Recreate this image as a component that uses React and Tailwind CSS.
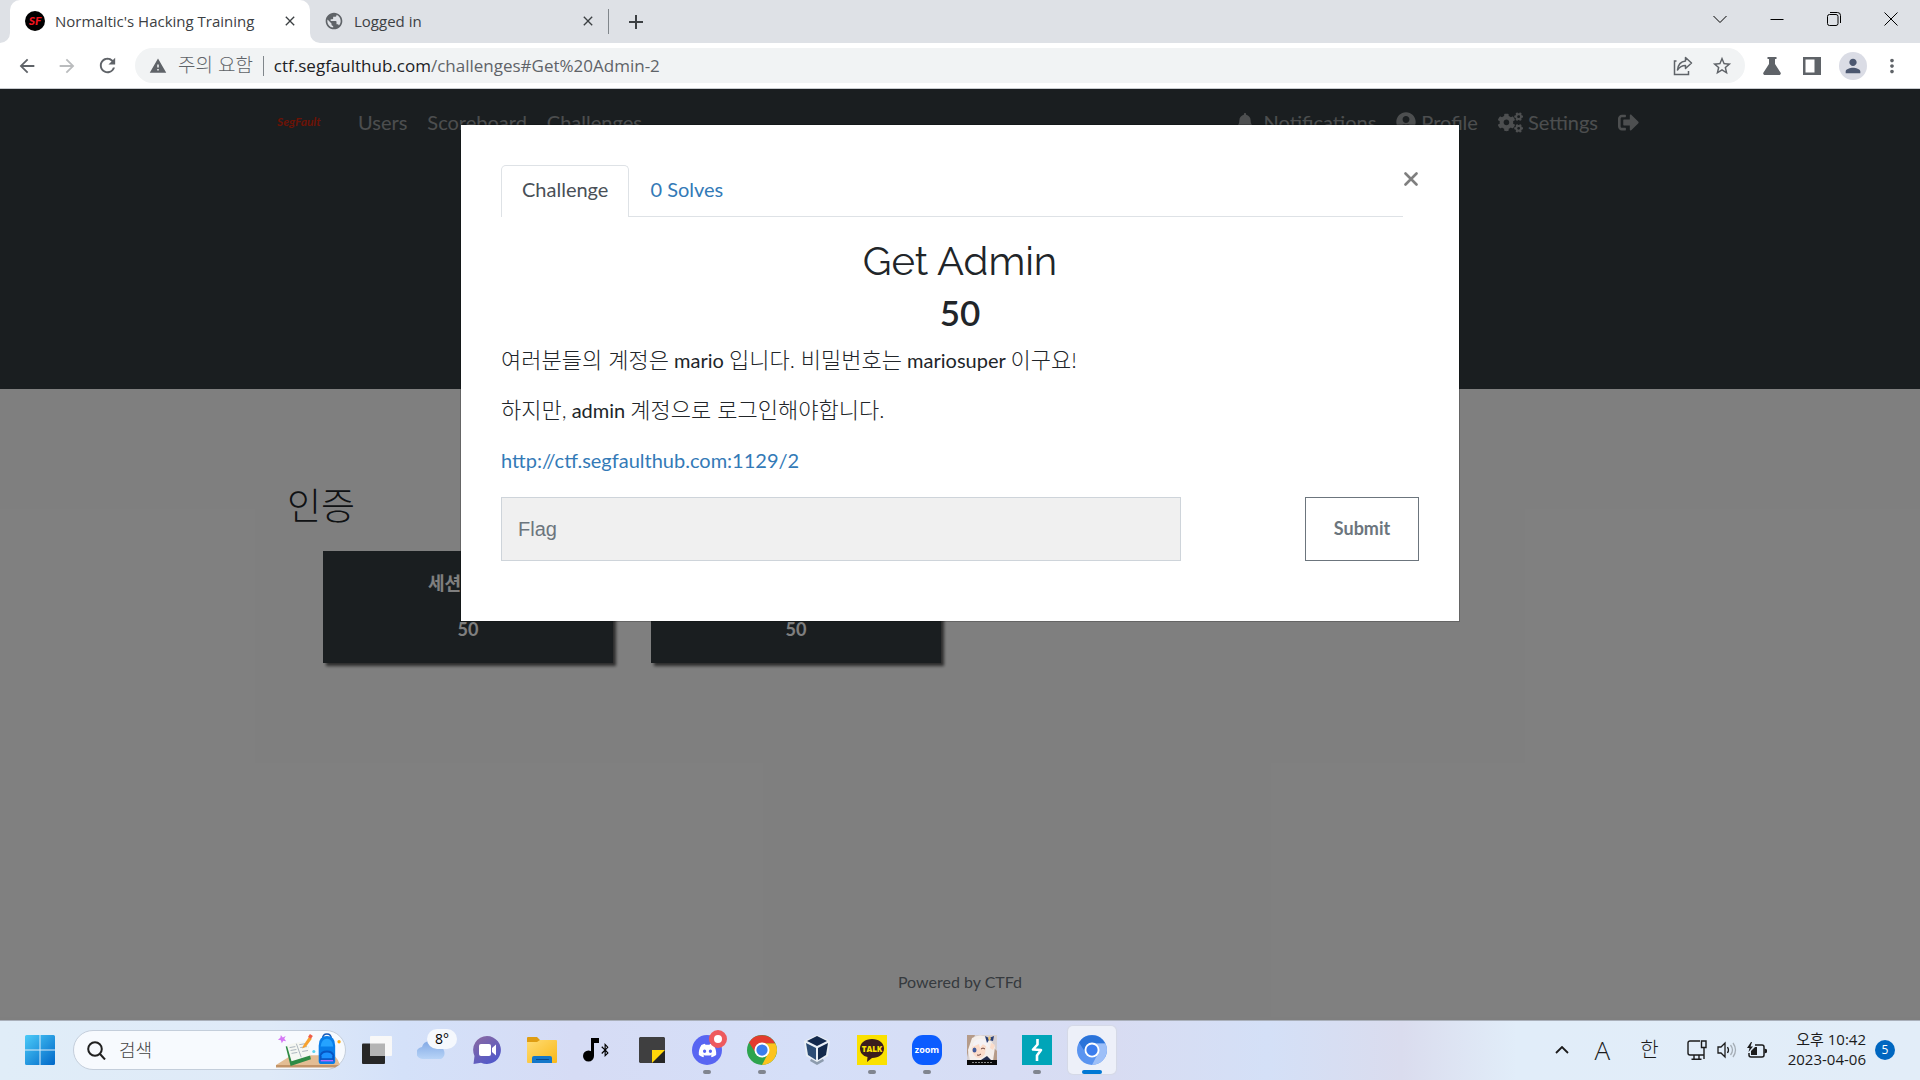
import { useState } from 'react'
import { FaBell, FaBluetoothB, FaCogs, FaDiscord, FaSignOutAlt, FaUserCircle } from 'react-icons/fa'
import {
  MdAdd,
  MdArrowBack,
  MdArrowForward,
  MdClose,
  MdMoreVert,
  MdPerson,
  MdPublic,
  MdRefresh,
  MdStarOutline,
  MdWarning,
} from 'react-icons/md'

const uiFont = "font-['Open_Sans','Noto_Sans_CJK_KR',sans-serif]"
const siteFont = "font-['Lato','Noto_Sans_CJK_KR',sans-serif]"

function TabStrip() {
  return (
    <div className="flex h-[43px] items-stretch bg-[#dee1e6] pl-[10px] text-[15px] text-[#3c4043]">
      <div className="relative flex w-[300px] items-center rounded-t-[10px] bg-white pr-[12px] pb-px pl-[15px]">
        <span className="flex size-5 items-center justify-center rounded-full bg-black font-['Lato',sans-serif] text-xs font-black text-[#f0141e] italic">
          SF
        </span>
        <span className="ml-[10px] flex-1 truncate">Normaltic's Hacking Training</span>
        <button aria-label="Close tab"><MdClose className="size-4" /></button>
        <svg className="absolute bottom-0 -left-[10px] size-[10px] text-white" viewBox="0 0 10 10" aria-hidden="true">
          <path fill="currentColor" d="M10 0v10H0A10 10 0 0 0 10 0z" />
        </svg>
        <svg className="absolute -right-[10px] bottom-0 size-[10px] text-white" viewBox="0 0 10 10" aria-hidden="true">
          <path fill="currentColor" d="M0 0v10h10A10 10 0 0 1 0 0z" />
        </svg>
      </div>
      <div className="flex w-[298px] items-center pr-[12px] pb-px pl-[14px]">
        <MdPublic className="size-5 text-[#5f6368]" />
        <span className="ml-[10px] flex-1 truncate">Logged in</span>
        <button aria-label="Close tab"><MdClose className="size-4" /></button>
      </div>
      <div className="my-[9px] w-px bg-[#80868b]" />
      <button aria-label="New tab" className="ml-[15px]"><MdAdd className="size-6" /></button>
      <div className="ml-auto flex items-center gap-[43px] pr-[22px] pb-[5px] text-black">
        <button aria-label="Search tabs">
          <svg width="14" height="14" viewBox="0 0 14 14" fill="none" stroke="currentColor"><path d="M.5 4 7 10.500 13.500 4" /></svg>
        </button>
        <button aria-label="Minimize">
          <svg width="14" height="14" viewBox="0 0 14 14" fill="none" stroke="currentColor"><path d="M.5 7.500h13" /></svg>
        </button>
        <button aria-label="Restore">
          <svg width="14" height="14" viewBox="0 0 14 14" fill="none" stroke="currentColor">
            <rect x=".5" y="2.500" width="10.500" height="11" rx="2" />
            <path d="M3 .5h7.500a3 3 0 0 1 3 3v7.500" />
          </svg>
        </button>
        <button aria-label="Close">
          <svg width="14" height="14" viewBox="0 0 14 14" fill="none" stroke="currentColor"><path d="m.5.5 13 13M13.500.5l-13 13" /></svg>
        </button>
      </div>
    </div>
  )
}

function Toolbar() {
  return (
    <div className="flex h-[46px] items-center border-b border-[#c8cbcf] bg-white pr-[17px] pl-[16px] text-[#5f6368]">
      <button aria-label="Back"><MdArrowBack className="size-[22px]" /></button>
      <button aria-label="Forward" className="ml-[18px] text-[#babcbe]"><MdArrowForward className="size-[22px]" /></button>
      <button aria-label="Reload" className="ml-[18px]"><MdRefresh className="size-[23px]" /></button>
      <div className="ml-[16px] flex h-[35px] flex-1 items-center rounded-full bg-[#f1f3f4] pr-[12px] pl-[14px] text-[17px]">
        <MdWarning className="size-[18px]" />
        <span className="ml-[11px] text-[19px] font-light">주의 요함</span>
        <span className="mx-[10px] h-5 w-px bg-[#80868b]" />
        <span className="flex-1">
          <span className="text-[#202124]">ctf.segfaulthub.com</span>/challenges#Get%20Admin-2
        </span>
        <button aria-label="Share">
          <svg width="20" height="20" viewBox="0 0 20 20" fill="none" stroke="currentColor" strokeWidth="1.5">
            <path d="M3.500 5H1.500v13.500h14V15" />
            <path strokeLinejoin="round" d="M12.500 1.500 18.500 7l-6 5.500V9.500C9 9.500 6.500 11 4.500 14c.5-5 3.500-8.500 8-9z" />
          </svg>
        </button>
        <button aria-label="Bookmark" className="ml-[18px]"><MdStarOutline className="size-[22px]" /></button>
      </div>
      <button aria-label="Labs" className="ml-[18px]">
        <svg width="18" height="18" viewBox="0 0 18 18" fill="currentColor">
          <path d="M4.500 0h9v2H12v5l5.500 8.500c.8 1.300 0 2.500-1.500 2.500H2C.5 18-.3 16.800.5 15.500L6 7V2H4.500z" />
        </svg>
      </button>
      <button aria-label="Side panel" className="ml-[22px]">
        <svg width="18" height="18" viewBox="0 0 18 18" fill="currentColor">
          <path fillRule="evenodd" d="M0 0h18v18H0zM2.500 2.500v13h9v-13z" />
        </svg>
      </button>
      <button aria-label="Profile" className="ml-[18px] flex size-7 items-center justify-center rounded-full bg-[#dadce5] text-[#4b5770]">
        <MdPerson className="size-[22px]" />
      </button>
      <button aria-label="Menu" className="ml-[14px]"><MdMoreVert className="size-[22px]" /></button>
    </div>
  )
}

function SiteNav() {
  return (
    <nav className="mx-auto flex h-[66px] max-w-[1366px] items-center text-xl text-white/50">
      <a href="#home" className="flex h-4 w-[71px] items-center font-['Lato',sans-serif] text-xs font-bold text-[#d6260c] italic">
        SegFault
      </a>
      <div className="flex gap-5 pl-[10px]">
        <a href="#users">Users</a>
        <a href="#scoreboard">Scoreboard</a>
        <a href="#challenges">Challenges</a>
      </div>
      <div className="ml-auto flex gap-5 pr-1">
        <a href="#notifications" className="flex items-center gap-[10px]"><FaBell className="size-[18px]" />Notifications</a>
        <a href="#profile" className="flex items-center gap-[5px]"><FaUserCircle className="size-5" />Profile</a>
        <a href="#settings" className="flex items-center gap-[5px]"><FaCogs className="size-[25px]" />Settings</a>
        <a href="#logout" aria-label="Logout" className="flex items-center"><FaSignOutAlt className="size-[21px]" /></a>
      </div>
    </nav>
  )
}

function ChallengeCard({ name, value, align }) {
  return (
    <button className={`h-[112px] w-[290px] bg-[#343c40] pb-[3px] text-lg font-bold text-white shadow-[3px_3px_3px_0_rgba(0,0,0,0.65)] ${align}`}>
      <p className="mx-auto mb-[18px] w-20 whitespace-nowrap">{name}</p>
      <p className="text-center">{value}</p>
    </button>
  )
}

function ChallengeModal() {
  const [flag, setFlag] = useState('')
  return (
    <div className="absolute inset-0 flex items-start justify-center bg-black/50 pt-[35px]">
      <div role="dialog" aria-label="Get Admin" className="w-full max-w-[1000px] border border-black/20 bg-white bg-clip-padding px-10 pb-[60px] text-xl leading-[30px] text-[#212529]">
        <div className="flex items-start pt-10">
          <div role="tablist" className="flex flex-1 border-b border-[#dee2e6]">
            <button role="tab" aria-selected="true" className="-mb-px h-[52px] rounded-t-[5px] border border-b-0 border-[#dee2e6] bg-white px-5 pb-[5px] text-[#495057]">
              Challenge
            </button>
            <button role="tab" aria-selected="false" className="px-[21px] pb-1 text-[#337ab7]">0 Solves</button>
          </div>
          <button aria-label="Close" className="flex h-7 w-4 items-center justify-center text-[#7f7f7f]">
            <svg width="14" height="14" viewBox="0 0 14 14" stroke="currentColor" strokeWidth="2.600" strokeLinecap="round">
              <path d="m1.500 1.500 11 11M12.500 1.500l-11 11" />
            </svg>
          </button>
        </div>
        <h2 className="mt-5 text-center font-['Raleway','Open_Sans',sans-serif] text-[40px] leading-[48px]">Get Admin</h2>
        <h3 className="mt-[6px] text-center text-[35px] leading-[42px] font-semibold">50</h3>
        <div className="mt-3 flex flex-col gap-5">
          <p>
            <span className="text-[22px] font-light">여러분들의 계정은</span> mario{' '}
            <span className="text-[22px] font-light">입니다. 비밀번호는</span> mariosuper{' '}
            <span className="text-[22px] font-light">이구요!</span>
          </p>
          <p>
            <span className="text-[22px] font-light">하지만,</span> admin{' '}
            <span className="text-[22px] font-light">계정으로 로그인해야합니다.</span>
          </p>
          <p><a href="http://ctf.segfaulthub.com:1129/2" className="text-[#337ab7]">http://ctf.segfaulthub.com:1129/2</a></p>
        </div>
        <div className="mt-[22px] flex h-16 justify-between">
          <input
            aria-label="Flag"
            placeholder="Flag"
            value={flag}
            onChange={(e) => setFlag(e.target.value)}
            className="w-[680px] border border-[#ced4da] bg-[#f0f0f0] px-4 font-['Liberation_Sans',sans-serif] text-xl placeholder:text-[#6c757d]"
          />
          <button className="w-[114px] border border-[#6c757d] pb-[2px] text-lg font-bold text-[#6c757d]">Submit</button>
        </div>
      </div>
    </div>
  )
}

function Site() {
  return (
    <main className={`relative flex flex-1 flex-col bg-white ${siteFont}`}>
      <header className="h-[300px] bg-[#343c40]"><SiteNav /></header>
      <section className="mx-auto w-full max-w-[1346px] pt-[93px]">
        <h3 className="text-[37px] leading-[48px] font-light text-[#212529]">인증</h3>
        <div className="mt-[21px] flex gap-[38px] pl-9">
          <ChallengeCard name="세션" value="50" align="text-left" />
          <ChallengeCard name="Get Admin" value="50" align="text-center" />
        </div>
      </section>
      <footer className="mt-auto pb-[26px] text-center text-base text-[#6c757d]">Powered by CTFd</footer>
      <ChallengeModal />
    </main>
  )
}

function WindowsLogo() {
  return (
    <svg width="30" height="30" viewBox="0 0 30 30">
      <defs>
        <linearGradient id="win" x1="0" y1="0" x2="1" y2="1">
          <stop stopColor="#4ccbf8" />
          <stop offset="1" stopColor="#0067c8" />
        </linearGradient>
      </defs>
      <path fill="url(#win)" d="M1.500 0h13v14.500H0v-13A1.500 1.500 0 0 1 1.500 0zM15.500 0h13A1.500 1.500 0 0 1 30 1.500v13H15.500zM0 15.500h14.500V30h-13A1.500 1.500 0 0 1 0 28.500zM15.500 15.500H30v13a1.500 1.500 0 0 1-1.500 1.500h-13z" />
    </svg>
  )
}

function BackpackArt() {
  return (
    <svg width="65" height="36" viewBox="0 0 67 37">
      <path fill="#e3bd94" d="M16 24h44q4 4 6 10H0z" />
      <path fill="#c39468" d="M0 34h65l-4 2.500H0z" />
      <path fill="#d678f5" d="m5 3 2 2.500L10 4 8.500 7l2 2.500-3-.5L6 11.500 5 8.500 2 8l2.500-2z" />
      <path fill="#2e8b45" d="m10 15 22-5 4 18-21 7z" />
      <path fill="#f5f7f2" d="m11 13 10-2 11-2 4 15-10 3-10 3z" />
      <path stroke="#a9b4bd" fill="none" d="m21 12 5 14M14 16l6-1M15 19l6-1M16 22l6-1M24 13l6-1M25 16l7-1M27 20l6-1" />
      <path fill="#f7a12c" d="m28 14 6-9 3 2-6 8-4 2z" />
      <path fill="#ef5c46" d="m33 5 2-3 3 2-2 3z" />
      <circle cx="39" cy="20" r="1.600" fill="#5ad3ee" />
      <circle cx="65" cy="10" r="1.700" fill="#ffab0f" />
      <path fill="none" stroke="#1659b7" strokeWidth="1.500" d="M48 7q0-5 4.500-5T57 7" />
      <path fill="#087de8" d="M44 14q0-10 8.500-10T61 14v16q0 3-3 3H47q-3 0-3-3z" />
      <path fill="#25a3ff" d="M46 15q1-8 6.500-8T59 15z" />
      <path fill="#0756c3" d="M45 24q1-5 7.500-5t7.500 5v6H45z" />
      <path fill="#1b92ff" d="M47 24q1-3 5.500-3t5.500 3v3H47z" />
      <path stroke="#b36cff" strokeWidth="1.500" d="M46 29.500h13" />
    </svg>
  )
}

function TaskView() {
  return (
    <svg width="30" height="28" viewBox="0 0 30 28">
      <rect x="0" y="7.500" width="23" height="20.500" rx="1" fill="#272727" />
      <rect x="8" y="0" width="22" height="20" rx="1" fill="#f8f8f8" />
      <path fill="#b4b4b4" d="M8 7.500h15V20H8z" />
    </svg>
  )
}

function Weather() {
  return (
    <>
      <svg width="30" height="20" viewBox="0 0 30 20">
        <defs>
          <linearGradient id="cloud" x1="0" y1="0" x2="0" y2="1">
            <stop stopColor="#82a9e5" />
            <stop offset="1" stopColor="#b8d4f7" />
          </linearGradient>
        </defs>
        <path fill="url(#cloud)" d="M6 19a6 6 0 0 1-1-12 8 8 0 0 1 15-1 7 7 0 0 1 4 13h-18z" />
      </svg>
      <span className="absolute top-[3px] left-[19px] flex h-5 w-[30px] items-center justify-center rounded-full bg-[#f5f8fd] text-sm">8°</span>
    </>
  )
}

function ChatIcon() {
  return (
    <svg width="28" height="28" viewBox="0 0 28 28">
      <defs>
        <linearGradient id="chat" x1="0" y1="0" x2="0.600" y2="1">
          <stop stopColor="#8d6a9f" />
          <stop offset="1" stopColor="#5259c9" />
        </linearGradient>
      </defs>
      <path fill="url(#chat)" d="M14 0a14 14 0 1 1-6 26.700L.5 28 1.500 20A14 14 0 0 1 14 0z" />
      <rect x="6" y="8" width="12" height="12" rx="2" fill="#fff" />
      <path fill="#fff" d="m19 12 4-3.500v11L19 16z" />
    </svg>
  )
}

function FolderIcon() {
  return (
    <svg width="30" height="26" viewBox="0 0 30 26">
      <defs>
        <linearGradient id="folder" x1="0" y1="0" x2="1" y2="1">
          <stop stopColor="#ffdc74" />
          <stop offset="1" stopColor="#f9b818" />
        </linearGradient>
      </defs>
      <path fill="#df9d12" d="M0 1q0-1 1-1h9l3 3h15v6H0z" />
      <path fill="url(#folder)" d="M0 5h10l3-2h16q1 0 1 1v21q0 1-1 1H1q-1 0-1-1z" />
      <path fill="#1477c9" d="M5 26v-5q0-2 2-2h16q2 0 2 2v5z" />
      <path stroke="#09498c" d="M9 22.500h13" />
    </svg>
  )
}

function MusicIcon() {
  return (
    <>
      <svg className="shrink-0" width="16" height="24" viewBox="0 0 16 24">
        <circle cx="5.500" cy="18" r="5.500" />
        <path d="M8 0h8v5h-5v13H8z" />
      </svg>
      <FaBluetoothB className="-ml-px size-[14px] shrink-0" />
    </>
  )
}

function NoteIcon() {
  return (
    <svg width="26" height="26" viewBox="0 0 26 26">
      <path fill="#3f3f40" d="M1 0h24l1 1v24l-1 1H1l-1-1V1z" />
      <path fill="#252525" d="M13 13h13v13H13z" />
      <path fill="#ffd60a" d="M13 13h13L13 26z" />
    </svg>
  )
}

function DiscordIcon() {
  return (
    <>
      <span className="flex size-[30px] items-center justify-center rounded-full bg-[#5865f2]">
        <FaDiscord className="size-[19px] text-white" />
      </span>
      <span className="absolute top-1 right-[4px] size-[18px] rounded-full border-5 border-[#ee5a5d] bg-white" />
    </>
  )
}

function BrowserIcon({ top, left, right }) {
  return (
    <svg width="30" height="30" viewBox="0 0 48 48">
      <circle cx="24" cy="24" r="24" fill={left} />
      <path fill={right} d="M24 13h21.300A24 24 0 0 1 24 48l9.500-18.500z" />
      <path fill={top} d="M3.200 12a24 24 0 0 1 41.600 1H24a11 11 0 0 0-9.500 16.500z" />
      <circle cx="24" cy="24" r="12" fill="#fff" />
      <circle cx="24" cy="24" r="9" fill="#3b7ded" />
    </svg>
  )
}

function BoxIcon() {
  return (
    <svg width="26" height="30" viewBox="0 0 26 30">
      <path fill="#8d9cae" d="m13 30-7-4 2-4h10l2 4z" />
      <path fill="#e9eff5" d="M13 0 26 6l-2 15-11 6L2 21 0 6z" />
      <path fill="#13294c" d="m13 1 10 5-10 5L3 6z" />
      <path fill="#2c4c74" d="m2 8 10 5v12l-8-5z" />
      <path fill="#142a4b" d="m24 8-10 5v12l8-5z" />
    </svg>
  )
}

function TalkIcon() {
  return (
    <span className="relative flex size-[30px] items-center justify-center bg-[#fae100]">
      <svg className="absolute inset-0" width="30" height="30" viewBox="0 0 30 30">
        <path fill="#3a1d1d" d="M15 4c7 0 12 4 12 9.500S22 23 15 23l-5 4 .5-5C6 21 3 18 3 13.500 3 8 8 4 15 4z" />
      </svg>
      <span className="relative pb-[3px] font-['Open_Sans',sans-serif] text-[8px] leading-none font-extrabold text-[#fae100]">TALK</span>
    </span>
  )
}

function ZoomIcon() {
  return (
    <span className="flex size-[30px] items-center justify-center rounded-[11px] bg-[#0b5cff] pb-[2px] font-['Open_Sans',sans-serif] text-[9px] leading-none font-bold text-white">
      zoom
    </span>
  )
}

function GameIcon() {
  return (
    <svg width="30" height="30" viewBox="0 0 30 30">
      <path fill="#d7d0d2" d="M0 0h30v30H0z" />
      <path fill="#b59b89" d="M0 0h8L2 14 0 22zM26 12l4 4v9h-7z" />
      <path fill="#f4eeea" d="M5 3q8-5 17 0l6 9-2 14H3L1 15z" />
      <path fill="#fbdcca" d="M5 10q6-5 14 1l-1 8q-4 6-9 3-5-4-4-12z" />
      <path fill="#f5f2f4" d="M5 12Q7 3 15 4q6 1 7 9l-6-4-3 4-1-4z" />
      <ellipse cx="7.500" cy="15" rx="2" ry="2.500" fill="#435c9d" />
      <path fill="none" stroke="#6e443d" d="M14 14q2-2 4 0M10 20q2 1 4-1" />
      <path fill="#fbdcca" d="m24 8 4 2-2 5-3-2z" />
      <path fill="#263e78" d="m18 1 4 2 5-2-1 5-4-1-2 3z" />
      <path fill="#ebc374" d="m21 3 2-2 1 3-2 2z" />
      <path fill="#222b4c" d="m14 25 6-4 4 4z" />
      <path fill="#090909" d="M0 25h30v5H0z" />
      <path stroke="#888" strokeDasharray="2 1" d="M5 27.500h20" />
    </svg>
  )
}

function BurpIcon() {
  return (
    <svg width="30" height="30" viewBox="0 0 30 30">
      <path fill="#00a5b8" d="M0 0h30v30H0z" />
      <path fill="none" stroke="#fff" strokeWidth="2.600" strokeLinejoin="round" d="M15.500 4v5.500L11 14.500l8 .5-4 5.500V26" />
    </svg>
  )
}

const apps = [
  { name: 'Task view', icon: <TaskView /> },
  { name: 'Weather', icon: <Weather /> },
  { name: 'Chat', icon: <ChatIcon /> },
  { name: 'Explorer', icon: <FolderIcon /> },
  { name: 'Music', icon: <MusicIcon /> },
  { name: 'Notes', icon: <NoteIcon /> },
  { name: 'Discord', icon: <DiscordIcon />, open: true },
  { name: 'Chrome', icon: <BrowserIcon top="#e33b2e" left="#2da44e" right="#fcc31e" />, open: true },
  { name: 'VirtualBox', icon: <BoxIcon /> },
  { name: 'KakaoTalk', icon: <TalkIcon />, open: true },
  { name: 'Zoom', icon: <ZoomIcon />, open: true },
  { name: 'Game', icon: <GameIcon /> },
  { name: 'Burp Suite', icon: <BurpIcon />, open: true },
  { name: 'Chromium', icon: <BrowserIcon top="#2a73d9" left="#5a94f0" right="#9dbff8" />, active: true },
]

function Tray() {
  return (
    <div className="ml-auto flex items-center pr-[25px] text-[#1b1b1b]">
      <svg width="14" height="8" viewBox="0 0 14 8" fill="none" stroke="currentColor" strokeWidth="1.800"><path d="m1 7 6-6 6 6" /></svg>
      <span className="ml-[24px] w-[18px] text-center text-[26px] leading-none font-light">A</span>
      <span className="ml-[29px] text-xl leading-none font-light">한</span>
      <svg className="ml-[28px]" width="20" height="20" viewBox="0 0 20 20" fill="none" stroke="currentColor" strokeWidth="1.400">
        <path d="M13 1H3a2 2 0 0 0-2 2v10a2 2 0 0 0 2 2h14M7 15v4M12 15v4M4.500 19.200h10" />
        <path d="M14.500 1h4.500v6.500h-4.500zM17 8v11" />
      </svg>
      <svg className="ml-[10px]" width="20" height="18" viewBox="0 0 20 18" fill="none" stroke="currentColor" strokeWidth="1.300">
        <path d="M1 6h3l4-4v14l-4-4H1zM10.500 6q2 3 0 6" />
        <path stroke="#a5adb5" d="M13.500 4q4 5 0 10M16 2q5 7 0 14" />
      </svg>
      <svg className="ml-[10px]" width="20" height="17" viewBox="0 0 20 17" fill="none" stroke="currentColor" strokeWidth="1.500">
        <path d="M8 3h7q2 0 2 2v8q0 2-2 2H4q-2 0-2-2v-2" />
        <path fill="currentColor" stroke="none" d="M10 5v8H4V9l4-4zM17.500 6.500l2.500 1v3l-2.500 1zM4 0 0 6h2.500L1.500 10 6 4.500H3.500L5 0z" />
      </svg>
      <div className="ml-[21px] pb-[2px] text-right text-[15px] leading-5">
        <p>오후 10:42</p>
        <p>2023-04-06</p>
      </div>
      <span className="ml-[9px] flex size-5 items-center justify-center rounded-full bg-[#0067c0] text-xs text-white">5</span>
    </div>
  )
}

function Taskbar() {
  return (
    <div className="flex h-[60px] items-center border-t border-[#aab0ba] bg-linear-[90deg,#e0edf8_0%,#dfeaf8_14%,#d4e1f9_21%,#d6dcf5_30%,#d5dff8_42%,#d8dcf2_58%,#d4e0f7_66%,#dadcee_73%,#e1edf9_79%,#e2edf8_100%] pb-px pl-[25px]">
      <button aria-label="Start"><WindowsLogo /></button>
      <label className="ml-[18px] flex h-10 w-[273px] items-center rounded-full border border-[#c4cedb] bg-[#f7fafe] pr-[4px] pl-[13px]">
        <svg width="19" height="19" viewBox="0 0 19 19" fill="none" stroke="#202020" strokeWidth="2"><circle cx="8" cy="8" r="6.800" /><path d="m13 13 5 5.500" /></svg>
        <input placeholder="검색" aria-label="검색" className="ml-[13px] w-0 flex-1 text-lg font-light placeholder:text-[#444]" />
        <BackpackArt />
      </label>
      <div className="ml-[7px] flex gap-[7px]">
        {apps.map((app) => (
          <button
            key={app.name}
            aria-label={app.name}
            className={`relative flex size-12 items-center justify-center rounded-[5px] ${app.active ? 'bg-[#edf0f9] shadow-[0_0_1px_1px_#d5d9e6]' : ''}`}
          >
            {app.icon}
            {app.open && <span className="absolute bottom-0 left-5 h-1 w-2 rounded-full bg-[#80858f]" />}
            {app.active && <span className="absolute bottom-0 left-[14px] h-1 w-5 rounded-full bg-[#0078d4]" />}
          </button>
        ))}
      </div>
      <Tray />
    </div>
  )
}

export default function App() {
  return (
    <div className={`flex min-h-screen flex-col ${uiFont}`}>
      <TabStrip />
      <Toolbar />
      <Site />
      <Taskbar />
    </div>
  )
}
